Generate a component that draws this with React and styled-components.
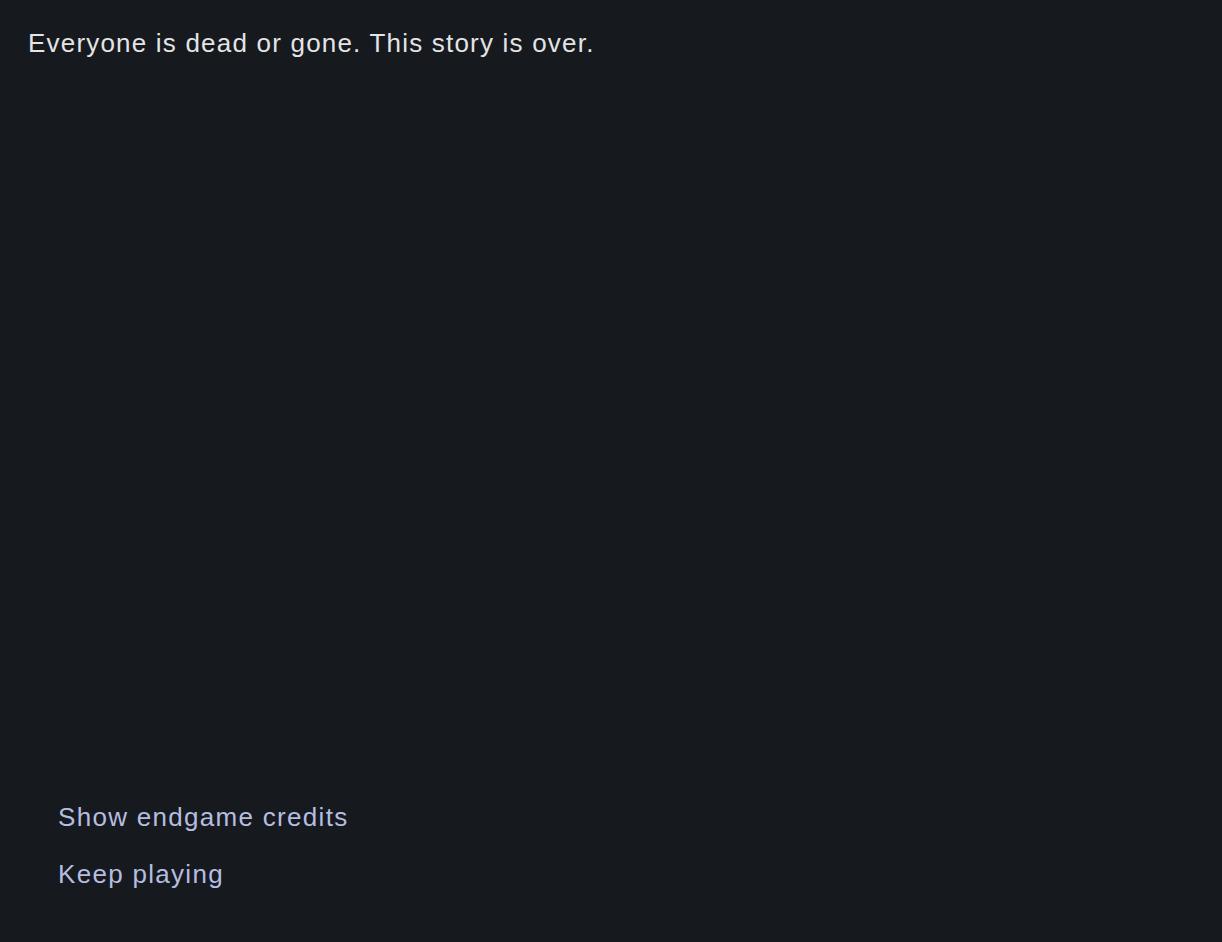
import React from "react";
import styled, { createGlobalStyle } from "styled-components";

const Global = createGlobalStyle`
  html, body {
    margin: 0;
    padding: 0;
    background: #16191d;
  }
  #root {
    min-height: 100vh;
  }
`

const Screen = styled.div`
  box-sizing: border-box;
  height: 100vh;
  display: flex;
  flex-direction: column;
  justify-content: space-between;
  padding: 25px 28px 50px;
  background: #16191d;
  font-family: "Liberation Sans", Arial, sans-serif;
`
const Message = styled.p`
  margin: 0;
  color: #e4e4e6;
  font-size: 26px;
  line-height: 36px;
  letter-spacing: 1.2px;
`
const Choices = styled.div`
  display: flex;
  flex-direction: column;
  gap: 21px;
  padding-left: 30px;
`
const Choice = styled.button`
  all: unset;
  cursor: pointer;
  color: #b5bde0;
  font-family: "Liberation Sans", Arial, sans-serif;
  font-size: 26px;
  line-height: 36px;
  letter-spacing: 1.3px;
`

const App = () => {
  return (
    <Screen>
      <Global />
      <Message>Everyone is dead or gone. This story is over.</Message>
      <Choices>
        <Choice>Show endgame credits</Choice>
        <Choice>Keep playing</Choice>
      </Choices>
    </Screen>
  );
};

export default App;
